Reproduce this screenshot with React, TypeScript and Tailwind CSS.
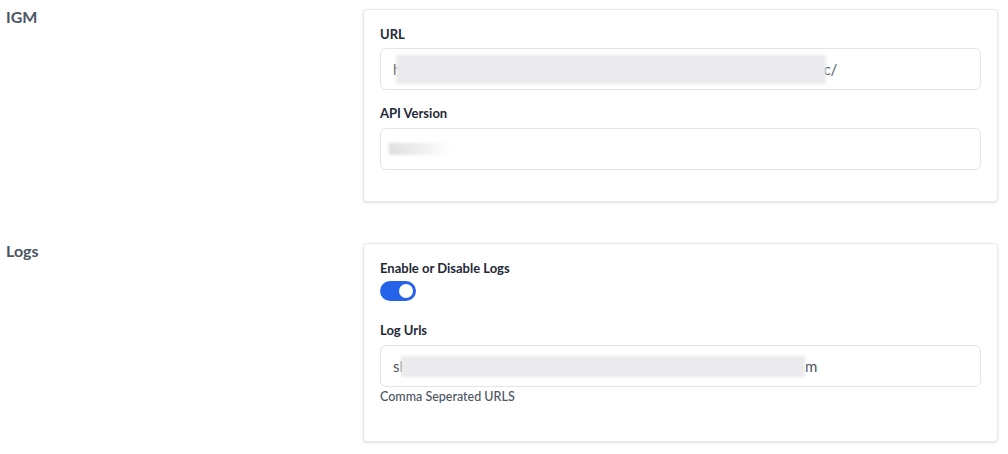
const FONT = { fontFamily: 'Lato, "Noto Sans", sans-serif' };

function Blur({ w, h = 'h-[29px]', className = '' }: { w: string; h?: string; className?: string }) {
    return <span className={`inline-block ${w} ${h} bg-[#ebebed] blur-[1.5px] ${className}`} />;
}

function Field({ children, className = '' }: { children: React.ReactNode; className?: string }) {
    return (
        <div className={`flex items-center h-[42px] px-[12px] border border-[#e2e4e8] rounded-md bg-white text-[15px] text-[#4b5563] ${className}`}>
            {children}
        </div>
    );
}

function Toggle() {
    return (
        <div className="w-[36px] h-[20px] rounded-full bg-[#2563eb] flex items-center justify-end px-[3px]">
            <div className="w-[14px] h-[14px] rounded-full bg-white" />
        </div>
    );
}

const LABEL = 'block text-[13px] font-bold text-[#1f2937] leading-[16px]';

export default function App() {
    return (
        <div className="bg-white min-h-screen pt-[9px] pl-[6px] pr-[10px]" style={FONT}>
            {/* IGM */}
            <div className="flex">
                <h2 className="w-[357px] text-[16px] font-bold text-[#4b5563] leading-[16px]">IGM</h2>
                <div className="flex-1 border border-[#e5e7eb] rounded-[4px] shadow-sm px-[16px] pt-[16px] pb-[31px]">
                    <label className={LABEL}>URL</label>
                    <Field className="mt-[6px]">
                        <span>h</span>
                        <Blur w="w-[430px]" className="-ml-[5px]" />
                        <span className="-ml-[3px]">c/</span>
                    </Field>
                    <label className={`${LABEL} mt-[15px]`}>API Version</label>
                    <Field className="mt-[7px] !px-[8px]">
                        <span className="inline-block w-[62px] h-[12px] bg-gradient-to-r from-[#dedee0] to-white blur-[1.5px]" />
                    </Field>
                </div>
            </div>

            {/* Logs */}
            <div className="flex mt-[41px]">
                <h2 className="w-[357px] text-[16px] font-bold text-[#4b5563] leading-[16px]">Logs</h2>
                <div className="flex-1 border border-[#e5e7eb] rounded-[4px] shadow-sm px-[16px] pt-[16px] pb-[36px]">
                    <label className={LABEL}>Enable or Disable Logs</label>
                    <div className="mt-[5px]">
                        <Toggle />
                    </div>
                    <label className={`${LABEL} mt-[21px]`}>Log Urls</label>
                    <Field className="mt-[7px]">
                        <span>sl</span>
                        <Blur w="w-[404px]" h="h-[21px]" className="-ml-[2px]" />
                        <span>m</span>
                    </Field>
                    <p className="text-[12.5px] font-medium text-[#4b5563] leading-[16px] mt-[2px]">Comma Seperated URLS</p>
                </div>
            </div>
        </div>
    );
}
